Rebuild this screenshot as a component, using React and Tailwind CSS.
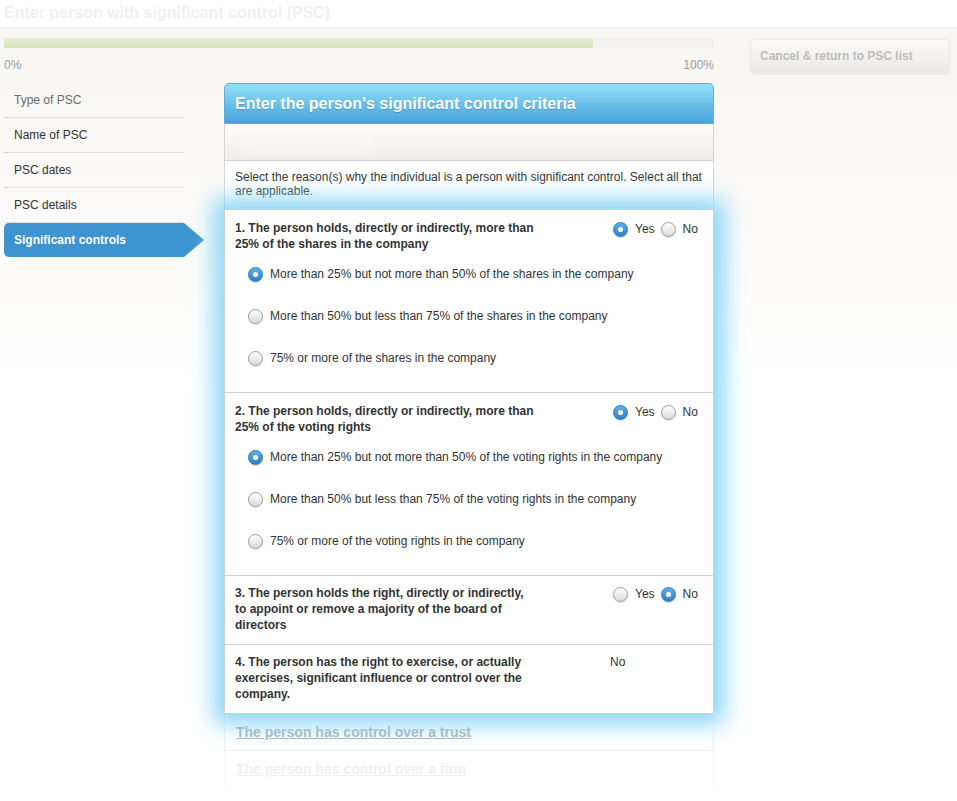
import React from 'react';

const font = "font-['Liberation_Sans',Arial,sans-serif]";

function Radio({ checked }) {
  if (checked) {
    return (
      <span className="inline-flex h-[15px] w-[15px] shrink-0 items-center justify-center rounded-full border border-[#2f78b8] bg-linear-to-b from-[#5db0e8] to-[#2c80c4] shadow-[0_1px_1px_rgba(0,0,0,0.15)]">
        <span className="h-[5px] w-[5px] rounded-full bg-white" />
      </span>
    );
  }
  return (
    <span className="inline-block h-[15px] w-[15px] shrink-0 rounded-full border border-[#9b9b9b] bg-linear-to-b from-white to-[#d9d9d9] shadow-[0_1px_1px_rgba(0,0,0,0.12)]" />
  );
}

function YesNo({ value }) {
  return (
    <div className="flex items-center self-start pl-[3px] pt-[1px] text-[12px] leading-[16px] text-[#333]">
      <Radio checked={value === 'yes'} />
      <span className="ml-[7px]">Yes</span>
      <span className="ml-[6px] flex"><Radio checked={value === 'no'} /></span>
      <span className="ml-[7px]">No</span>
    </div>
  );
}

const sections = [
  {
    q: '1. The person holds, directly or indirectly, more than 25% of the shares in the company',
    value: 'yes',
    options: [
      'More than 25% but not more than 50% of the shares in the company',
      'More than 50% but less than 75% of the shares in the company',
      '75% or more of the shares in the company',
    ],
  },
  {
    q: '2. The person holds, directly or indirectly, more than 25% of the voting rights',
    value: 'yes',
    options: [
      'More than 25% but not more than 50% of the voting rights in the company',
      'More than 50% but less than 75% of the voting rights in the company',
      '75% or more of the voting rights in the company',
    ],
  },
  {
    q: '3. The person holds the right, directly or indirectly, to appoint or remove a majority of the board of directors',
    value: 'no',
  },
  {
    q: '4. The person has the right to exercise, or actually exercises, significant influence or control over the company.',
    text: 'No',
  },
];

const navItems = ['Type of PSC', 'Name of PSC', 'PSC dates', 'PSC details'];

export default function App() {
  return (
    <div className={`${font} relative h-[801px] w-[957px] overflow-hidden bg-white text-[#333]`}>
      <div className="h-[28px] border-b border-[#efefef] bg-white pl-[4px] pt-[4px] text-[16px] font-bold leading-[18px] text-[#f0f0f0]">
        Enter person with significant control (PSC)
      </div>

      <div className="flex bg-[linear-gradient(to_bottom,#f7f6f2_0px,#fbfaf8_180px,#ffffff_360px)] pb-[200px]">
        <div className="ml-[4px] w-[710px]">
          <div className="mt-[10px] h-[10px] bg-[#f2f1ed]">
            <div className="h-full w-[589px] bg-linear-to-b from-[#e8f0d4] to-[#d7e5b8]" />
          </div>
          <div className="mt-[10px] flex justify-between text-[12px] leading-[14px] text-[#9a9a9a]">
            <span>0%</span>
            <span>100%</span>
          </div>

          <div className="mt-[11px] flex gap-[20px]">
            <nav className="w-[200px] text-[12px]">
              {navItems.map((item, i) => (
                <div
                  key={item}
                  className={`flex h-[35px] w-[180px] items-center border-b border-dotted border-[#c9c9c9] pl-[10px] ${i === 0 ? 'text-[#6b6b6b]' : 'text-[#333]'}`}
                >
                  {item}
                </div>
              ))}
              <div className="flex h-[34px]">
                <div className="flex w-[180px] items-center rounded-l-[5px] bg-[#3d94d0] pl-[10px] font-bold text-white">
                  Significant controls
                </div>
                <div className="h-0 w-0 border-y-[17px] border-l-[20px] border-y-transparent border-l-[#3d94d0]" />
              </div>
            </nav>

            <main className="w-[490px]">
              <div className="flex h-[41px] items-center rounded-t-[5px] border border-[#63acd9] bg-linear-to-b from-[#92e0f8] to-[#45a3da] pl-[10px] text-[16px] font-bold text-white [text-shadow:0_1px_1px_rgba(0,0,0,0.2)]">
                Enter the person's significant control criteria
              </div>
              <div className="flex h-[37px] items-center border-x border-b border-[#d3d3d3] bg-linear-to-b from-[#fdfcfb] to-[#efede8] pl-[12px]">
                <div className="h-[18px] w-[140px] rounded-full bg-[#f7f6f3] blur-[3px]" />
              </div>
              <div className="h-[48px] border-x border-[#d5d5d5] bg-white px-[10px] pt-[9px] text-[12px] leading-[14px] text-[#333]">
                Select the reason(s) why the individual is a person with significant control. Select all that are applicable.
              </div>

              <div className="relative z-10 border border-[#cfcfcf] bg-white shadow-[0_0_22px_10px_#88d5f6]">
                {sections.map((s, i) => (
                  <div
                    key={i}
                    className={`${i < 3 ? 'border-b border-[#cfcfcf]' : ''} px-[10px] ${s.options ? 'pt-[10px] pb-[13px]' : 'pt-[9px] pb-[11px]'}`}
                  >
                    <div className="flex">
                      <div className="w-[375px]">
                        <div className="w-[300px] text-[12px] font-bold leading-[16px] text-[#333]">{s.q}</div>
                      </div>
                      {s.text ? (
                        <div className="text-[12px] leading-[16px] text-[#333]">{s.text}</div>
                      ) : (
                        <YesNo value={s.value} />
                      )}
                    </div>
                    {s.options && (
                      <div className="mt-[1px] pl-[13px]">
                        {s.options.map((o, j) => (
                          <div key={o} className="flex h-[42px] items-center gap-[7px] text-[12px] text-[#333]">
                            <Radio checked={j === 0} />
                            <span>{o}</span>
                          </div>
                        ))}
                      </div>
                    )}
                  </div>
                ))}
              </div>

              <div className="flex h-[37px] items-center border-x border-b border-[#f0f0f0] pl-[11px]">
                <span className="text-[14px] font-bold text-[#a9b7be] underline">The person has control over a trust</span>
              </div>
              <div className="flex h-[37px] items-center border-x border-[#f8f8f8] pl-[11px]">
                <span className="text-[14px] font-bold text-[#f0f0f0] underline">The person has control over a firm</span>
              </div>
            </main>
          </div>
        </div>

        <div className="ml-[36px] mt-[11px] w-[200px]">
          <div className="flex h-[34px] items-center rounded-[4px] border border-[#ebeae6] bg-linear-to-b from-[#fbfaf8] to-[#ebe9e4] pl-[9px] text-[12px] font-bold text-[#bdbdbd] shadow-[0_1px_2px_rgba(0,0,0,0.08)]">
            Cancel &amp; return to PSC list
          </div>
        </div>
      </div>
    </div>
  );
}
